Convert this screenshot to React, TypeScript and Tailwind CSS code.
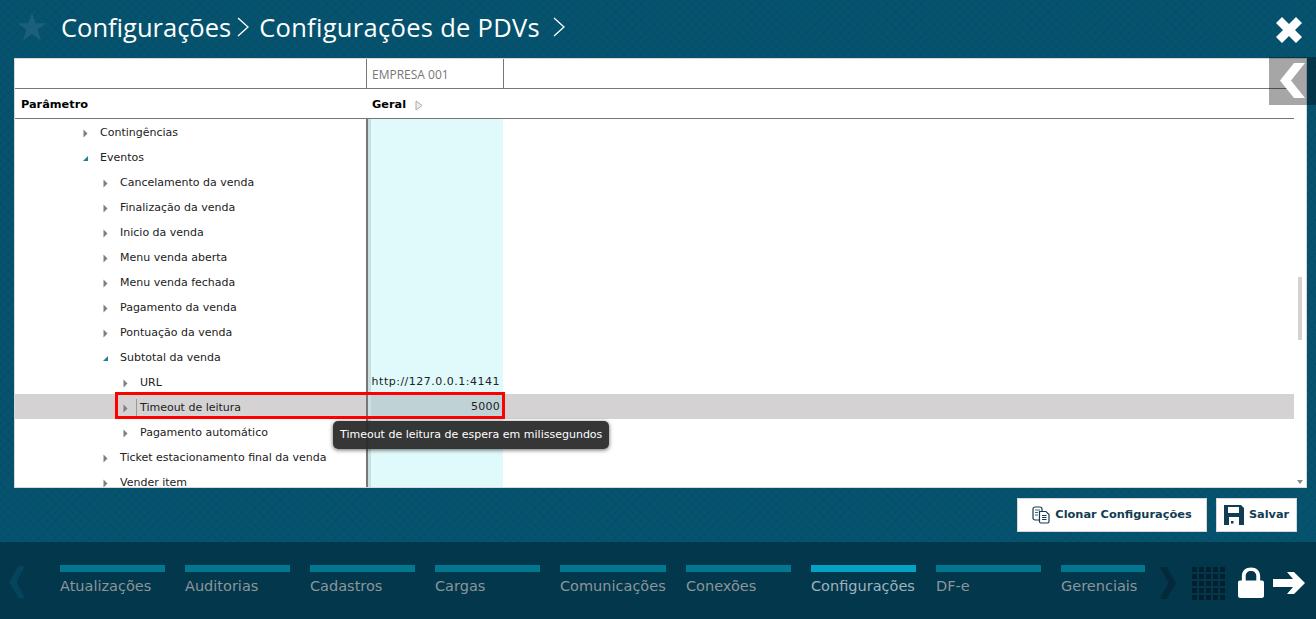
import React from 'react';

const FONT = { fontFamily: '"DejaVu Sans", Verdana, sans-serif' };
const OPEN = { fontFamily: '"Open Sans", sans-serif' };

type Row = { label: string; depth: number; open?: boolean; value?: string; selected?: boolean };

const ROWS: Row[] = [
  { label: 'Contingências', depth: 0 },
  { label: 'Eventos', depth: 0, open: true },
  { label: 'Cancelamento da venda', depth: 1 },
  { label: 'Finalização da venda', depth: 1 },
  { label: 'Inicio da venda', depth: 1 },
  { label: 'Menu venda aberta', depth: 1 },
  { label: 'Menu venda fechada', depth: 1 },
  { label: 'Pagamento da venda', depth: 1 },
  { label: 'Pontuação da venda', depth: 1 },
  { label: 'Subtotal da venda', depth: 1, open: true },
  { label: 'URL', depth: 2, value: 'http://127.0.0.1:4141' },
  { label: 'Timeout de leitura', depth: 2, value: '5000', selected: true },
  { label: 'Pagamento automático', depth: 2 },
  { label: 'Ticket estacionamento final da venda', depth: 1 },
  { label: 'Vender item', depth: 1 },
];

const MENU = [
  { label: 'Atualizações', w: 'w-[105px]', gap: 'mr-5' },
  { label: 'Auditorias', w: 'w-[105px]', gap: 'mr-5' },
  { label: 'Cadastros', w: 'w-[105px]', gap: 'mr-5' },
  { label: 'Cargas', w: 'w-[105px]', gap: 'mr-5' },
  { label: 'Comunicações', w: 'w-[106px]', gap: 'mr-5' },
  { label: 'Conexões', w: 'w-[105px]', gap: 'mr-5' },
  { label: 'Configurações', w: 'w-[105px]', gap: 'mr-5', active: true },
  { label: 'DF-e', w: 'w-[105px]', gap: 'mr-5' },
  { label: 'Gerenciais', w: 'w-[84px]', gap: '' },
];

const Caret = ({ open }: { open?: boolean }) =>
  open ? (
    <svg width="7" height="7" viewBox="0 0 7 7" className="shrink-0">
      <path d="M6 1V6H1Z" fill="#1f7f96" />
    </svg>
  ) : (
    <svg width="7" height="9" viewBox="0 0 7 9" className="shrink-0">
      <path d="M1.5 0.5L5.5 4.5L1.5 8.5Z" fill="#7f7f7f" />
    </svg>
  );

const Chevron = ({ className }: { className: string }) => (
  <svg width="14" height="20" viewBox="0 0 14 20" className={className}>
    <path d="M2 1L12 10L2 19" fill="none" stroke="#fff" strokeWidth="1.3" />
  </svg>
);

const TreeRow = ({ row }: { row: Row }) => {
  const indent = ['pl-[67px]', 'pl-[87px]', 'pl-[107px]'][row.depth];
  const spacing = row.value && row.value.length > 4 ? 'tracking-[0.5px]' : 'tracking-[0.25px]';
  return (
    <div className={`flex h-[25px] items-center ${row.selected ? 'bg-[#d4d2d2]' : ''}`}>
      <div className={`flex h-full w-[351px] shrink-0 items-center pt-[3px] ${indent}`}>
        <span className="flex w-[14px] justify-start">
          <Caret open={row.open} />
        </span>
        <span className={`h-[19px] w-[4px] shrink-0 ${row.selected ? 'border-l border-[#999]' : ''}`} />
        <span className="text-[11px] text-[#222]">{row.label}</span>
      </div>
      <div className="h-full w-[2px] shrink-0 bg-[#777]" />
      <div className="h-full w-[3px] shrink-0 bg-[#c9dfe0]" />
      <div
        className={`flex h-full w-[132px] shrink-0 items-center justify-end pr-[3px] pt-[1px] text-[11px] text-[#222] ${spacing} ${
          row.selected ? 'bg-[#bfd2d5]' : 'bg-[#e0fafc]'
        }`}
      >
        {row.value}
      </div>
    </div>
  );
};

export default function App() {
  return (
    <div
      style={FONT}
      className="relative flex h-[619px] w-[1316px] flex-col overflow-hidden bg-[#05536f] bg-[repeating-linear-gradient(45deg,rgba(0,0,0,0.05)_0_1px,transparent_1px_6px),repeating-linear-gradient(-45deg,rgba(0,0,0,0.05)_0_1px,transparent_1px_6px)]"
    >
      {/* Header */}
      <header className="flex h-[58px] shrink-0 items-center pb-[4px] pl-[17px] pr-[14px]">
        <svg width="30" height="30" viewBox="0 0 32 32" className="shrink-0">
          <path d="M16 1L20 12H31L22 19L25.5 30.5L16 23.5L6.5 30.5L10 19L1 12H12Z" fill="#1b5f7c" />
        </svg>
        <div className="ml-[14px] flex items-center text-[25.5px] text-white">
          <span style={OPEN}>Configurações</span>
          <Chevron className="ml-[5px]" />
          <span className="ml-[9px] tracking-[0.3px]" style={OPEN}>
            Configurações de PDVs
          </span>
          <Chevron className="ml-[12px]" />
        </div>
        <svg width="26" height="26" viewBox="0 0 26 26" className="ml-auto mt-[17px] self-start">
          <path d="M6 0L13 7L20 0L26 6L19 13L26 20L20 26L13 19L6 26L0 20L7 13L0 6Z" fill="#fff" />
        </svg>
      </header>

      {/* Grid panel */}
      <div className="relative ml-[14px] mr-[9px] flex h-[430px] shrink-0 flex-col border border-[#d8d8d8] bg-white">
        <div className="mr-[12px] flex h-[30px] shrink-0 border-b border-[#777]">
          <div className="w-[352px] border-r border-[#777]" />
          <div className="flex w-[137px] items-center border-r border-[#777] pl-[5px] pt-[2px] text-[12px] text-[#777]">
            <span style={OPEN}>EMPRESA 001</span>
          </div>
        </div>
        <div className="mr-[12px] flex h-[30px] shrink-0 items-center border-b border-[#777] pt-[3px] text-[11.3px] font-bold text-black">
          <div className="w-[352px] pl-[6px]">Parâmetro</div>
          <div className="flex items-center pl-[5px]">
            Geral
            <svg width="8" height="11" viewBox="0 0 8 11" className="ml-[9px]">
              <path d="M1 1L7 5.5L1 10Z" fill="#eee" stroke="#aaa" />
            </svg>
          </div>
        </div>

        <div className="relative min-h-0 flex-1 overflow-hidden">
          <div className="mr-[12px]">
            {ROWS.map((row) => (
              <TreeRow key={row.label} row={row} />
            ))}
          </div>
          <div className="absolute left-[1283px] top-[158px] h-[63px] w-[4px] bg-[#d4d2d2]" />
          <svg width="6" height="4" viewBox="0 0 6 4" className="absolute bottom-[3px] left-[1282px]">
            <path d="M0 0H6L3 4Z" fill="#8a8a8a" />
          </svg>

          {/* Selected cell highlight */}
          <div className="pointer-events-none absolute left-[100px] top-[273px] h-[27px] w-[390px] border-[3px] border-[#ff0000]" />
          {/* Tooltip */}
          <div className="absolute left-[318px] top-[302px] w-[276px] rounded-[5px] bg-[#2b2b2b]/95 px-[7px] py-[7px] text-[11px] leading-[14px] text-white shadow-[0_1px_4px_rgba(0,0,0,0.6)] whitespace-nowrap">
            Timeout de leitura de espera em milissegundos
          </div>
        </div>
      </div>

      {/* Collapse tab over the panel */}
      <div className="absolute left-[1269px] top-[57px] flex h-[48px] w-[47px] bg-black/35">
        <svg width="26" height="35" viewBox="0 0 26 35" className="ml-[11px] mt-[6px]">
          <path d="M25 0H14L0 17.5L14 35H25L11 17.5Z" fill="#fff" />
        </svg>
      </div>

      {/* Actions */}
      <div className="flex h-[54px] shrink-0 items-start justify-end pr-[19px] pt-[10px]">
        <button className="flex h-[34px] w-[190px] items-center justify-center gap-[5px] border border-[#d8d8d8] bg-white text-[11.35px] font-bold text-[#123c52]">
          <svg width="18" height="18" viewBox="0 0 18 18">
            <rect x="1" y="1" width="9" height="13" rx="2" fill="#fff" stroke="#123c52" strokeWidth="1.2" />
            <path d="M3 4h5M3 6.5h3M3 9h3" stroke="#123c52" strokeWidth="0.8" />
            <path d="M7.5 5.5H14L17 8.5V15.5C17 16.5 16.5 17 15.5 17H9C8 17 7.5 16.5 7.5 15.5Z" fill="#fff" stroke="#123c52" strokeWidth="1.2" />
            <path d="M10 9.5h4.5M10 11.5h4.5M10 13.5h4.5" stroke="#123c52" strokeWidth="1.2" />
          </svg>
          Clonar Configurações
        </button>
        <button className="ml-[9px] flex h-[34px] w-[81px] items-center justify-center gap-[5px] border border-[#d8d8d8] bg-white text-[11.3px] font-bold text-[#123c52]">
          <svg width="20" height="20" viewBox="0 0 20 20">
            <path fillRule="evenodd" d="M0 0H17L20 3V20H0ZM4 2V8H15V2ZM5 12V20H15V12Z" fill="#123c52" />
            <rect x="7" y="16" width="2.5" height="2.5" fill="#123c52" />
          </svg>
          Salvar
        </button>
      </div>

      {/* Bottom menu */}
      <nav className="relative flex h-[77px] shrink-0 bg-[#03374c] pl-[60px] pt-[23px]">
        <svg width="17" height="34" viewBox="0 0 18 34" className="absolute left-[9px] top-[23px]">
          <path d="M17 0H10L0 17L10 34H17L8 17Z" fill="#04445c" />
        </svg>
        {MENU.map((item) => (
          <div key={item.label} className={`${item.w} ${item.gap} shrink-0`}>
            <div className={`h-[7px] ${item.active ? 'bg-[#04a2c6]' : 'bg-[#03778f]'}`} />
            <div
              className={`mt-[4px] whitespace-nowrap text-[14.5px] leading-[20px] ${
                item.active ? 'text-[#9fb3bb]' : 'text-[#8c9599]'
              }`}
            >
              {item.label}
            </div>
          </div>
        ))}
        <svg width="17" height="34" viewBox="0 0 18 34" className="absolute left-[1159px] top-[24px]">
          <path d="M1 0H8L18 17L8 34H1L10 17Z" fill="#04293a" />
        </svg>
        <div className="absolute left-[1192px] top-[25px] grid grid-cols-5 gap-[2px]">
          {Array.from({ length: 25 }).map((_, i) => (
            <div key={i} className="h-[5px] w-[5px] bg-[#04202e]" />
          ))}
        </div>
        <svg width="26" height="31" viewBox="0 0 27 32" className="absolute left-[1238px] top-[25px]">
          <path
            fillRule="evenodd"
            d="M4 14V9.5C4 4 8 0.5 13.5 0.5S23 4 23 9.5V14H25C26 14 27 15 27 16V30C27 31 26 32 25 32H2C1 32 0 31 0 30V16C0 15 1 14 2 14ZM8 14H19V9.5C19 6 17 4 13.5 4S8 6 8 9.5Z"
            fill="#fff"
          />
        </svg>
        <svg width="32" height="22" viewBox="0 0 32 22" className="absolute left-[1273px] top-[30px]">
          <path d="M0 7H20L14 0H21L32 11L21 22H14L20 15H0Z" fill="#fff" />
        </svg>
      </nav>
    </div>
  );
}
